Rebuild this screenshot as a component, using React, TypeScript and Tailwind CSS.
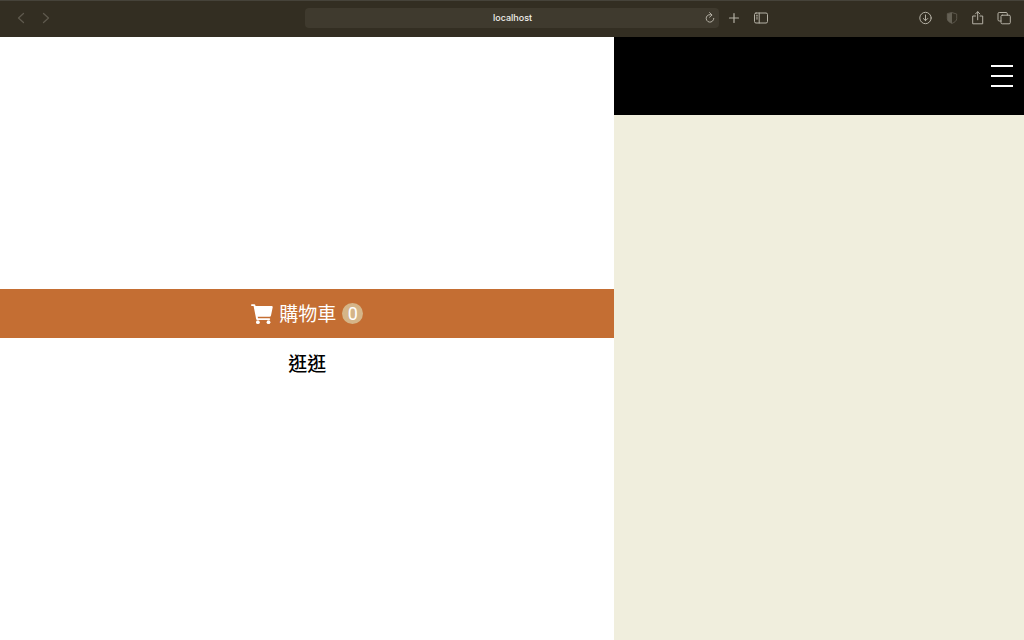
import type { ReactNode } from 'react';

interface ToolButtonProps {
  label: string;
  className?: string;
  disabled?: boolean;
  children: ReactNode;
}

function ToolButton({ label, className = '', disabled, children }: ToolButtonProps) {
  return (
    <button
      type="button"
      aria-label={label}
      disabled={disabled}
      className={`flex h-5 shrink-0 items-center justify-center ${className}`}
    >
      <svg
        viewBox="0 0 16 16"
        className="size-4"
        fill="none"
        stroke="currentColor"
        strokeLinecap="round"
        strokeLinejoin="round"
      >
        {children}
      </svg>
    </button>
  );
}

function CartIcon() {
  return (
    <svg viewBox="0 0 22 22" className="size-[22px]" fill="currentColor" aria-hidden="true">
      <path d="M.9 1.2H3.3a1 1 0 0 1 1 .8l.2 1H20.6a1.1 1.1 0 0 1 1.1 1.3l-1.7 8.2a1.5 1.5 0 0 1-1.5 1.2H6.7l.3 1.5H18.3a.9.9 0 0 1 0 1.8H6.2a1 1 0 0 1-1-.8L2.6 3H.9a.9.9 0 0 1 0-1.8z" />
      <circle cx="6.9" cy="19.2" r="1.9" />
      <circle cx="17.5" cy="19.2" r="1.9" />
    </svg>
  );
}

function BrowserBar() {
  return (
    <header className="grid h-[37px] grid-cols-[1fr_414px_1fr] items-center border-t border-[#46433a] bg-[#332e22] pb-0.5 text-[#b5b1a5]">
      <nav className="flex items-center gap-[9px] pl-[13px] text-[#5e594d]">
        <ToolButton label="Back" disabled>
          <path d="M10.5 3.5 5.5 8l5 4.5" strokeWidth="1.3" />
        </ToolButton>
        <ToolButton label="Forward" disabled>
          <path d="M5.5 3.5 10.5 8l-5 4.5" strokeWidth="1.3" />
        </ToolButton>
      </nav>

      <div className="flex h-5 items-center rounded bg-[#3f3a2e] pr-px pl-[18px]">
        <input
          type="text"
          aria-label="Address"
          defaultValue="localhost"
          className="min-w-0 flex-1 bg-transparent text-center font-['Inter',sans-serif] text-[9px] font-medium text-[#f1f0ec] outline-none"
        />
        <ToolButton label="Reload">
          <path d="M9.8 5A3.8 3.8 0 1 0 11.8 8.4" />
          <path d="M7.6 2.6 10 5 7.6 7.2" />
        </ToolButton>
      </div>

      <div className="flex items-center justify-between pr-3 pl-[7px]">
        <div className="flex items-center gap-[11px]">
          <ToolButton label="New tab">
            <path d="M8 3.5v9M3.5 8h9" strokeWidth="1.2" />
          </ToolButton>
          <ToolButton label="Sidebar">
            <rect x="1.5" y="3" width="13" height="10" rx="1.5" />
            <path d="M6.2 3v10" />
            <path d="M3.3 5.3h1.2M3.3 7.1h1.2M3.3 8.9h1.2" strokeWidth="0.9" />
          </ToolButton>
        </div>
        <div className="flex items-center gap-[10px]">
          <ToolButton label="Downloads">
            <circle cx="7.5" cy="8" r="5.7" />
            <path d="M7.5 5v5.6M5.3 8.5l2.2 2.2 2.2-2.2" />
          </ToolButton>
          <ToolButton label="Privacy report" className="text-[#646054]">
            <path d="M8 2.6 12.7 4v4.7c0 2-1.9 3.6-4.7 4.7-2.8-1.1-4.7-2.7-4.7-4.7V4z" strokeWidth="0.8" />
            <path d="M8 2.6v10.8c-2.8-1.1-4.7-2.7-4.7-4.7V4z" fill="currentColor" stroke="none" />
          </ToolButton>
          <ToolButton label="Share">
            <path d="M5.5 6H2.7v7.8h10V6H10" />
            <path d="M7.7 9.8V1.8M5.5 3.9l2.2-2.2 2.2 2.2" />
          </ToolButton>
          <ToolButton label="Tab overview">
            <rect x="5" y="5.2" width="9.3" height="8.6" rx="1.2" />
            <path d="M5 11H3.2A1.2 1.2 0 0 1 2 9.8V3.7a1.2 1.2 0 0 1 1.2-1.2h6.9a1.2 1.2 0 0 1 1.2 1.2v1.5" />
          </ToolButton>
        </div>
      </div>
    </header>
  );
}

function MobileMenu({ count }: { count: number }) {
  return (
    <nav className="flex w-3/5 flex-col justify-center bg-white text-[19px] leading-7">
      <a href="#cart" className="flex h-[49px] items-center justify-center gap-[6px] bg-[#c46e33] text-white">
        <CartIcon />
        <span className="pt-0.5">購物車</span>
        <span className="flex size-[21px] items-center justify-center rounded-full bg-[#d5b588] font-['Roboto',sans-serif] text-[18px] leading-none">
          {count}
        </span>
      </a>
      <a href="#shop" className="flex h-[50px] items-center justify-center pt-1 font-medium text-black">
        逛逛
      </a>
    </nav>
  );
}

export default function App() {
  return (
    <div className="flex min-h-screen flex-col font-['Liberation_Sans','Noto_Sans_CJK_TC',sans-serif]">
      <BrowserBar />
      <div className="flex flex-1">
        <MobileMenu count={0} />
        <main className="flex-1 bg-[#f0eedd]">
          <div className="flex h-[78px] items-center justify-end bg-black pr-[11px]">
            <button type="button" aria-label="Menu" className="flex w-[22px] flex-col gap-2">
              <span className="h-0.5 w-full bg-white" />
              <span className="h-0.5 w-full bg-white" />
              <span className="h-0.5 w-full bg-white" />
            </button>
          </div>
        </main>
      </div>
    </div>
  );
}
